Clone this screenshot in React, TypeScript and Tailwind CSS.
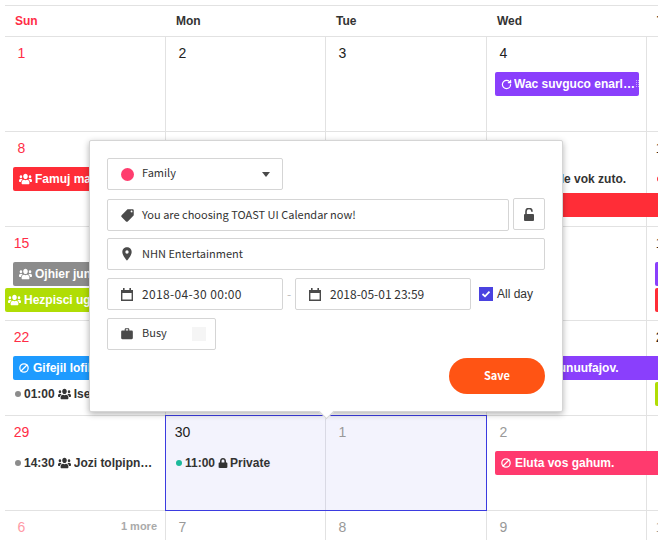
import type { ReactNode } from "react";
import { Ban, RotateCw } from "lucide-react";
import { FaLock, FaUsers } from "react-icons/fa";
import { MdLocalOffer, MdLocationOn, MdWork } from "react-icons/md";

const colStart = ["col-start-1", "col-start-2", "col-start-3", "col-start-4", "col-start-5"];
const weekGrid = "grid grid-cols-[161px_160px_161px_160px_160px]";

type DayTone = "sun" | "sunMuted" | "now" | "muted";

const toneClass: Record<DayTone, string> = {
  sun: "text-[#ff2d46]",
  sunMuted: "text-[#ff9aa6]",
  now: "text-[#222222]",
  muted: "text-[#999999]",
};

function Week({
  days,
  height,
  children,
}: {
  days: [string, DayTone][];
  height: string;
  children?: ReactNode;
}) {
  return (
    <div className={`${weekGrid} ${height} grid-rows-[35px_26px_26px_1fr] border-t border-[#e2e2e2]`}>
      {days.map(([label, tone], i) => (
        <div
          key={i}
          className={`${colStart[i]} row-span-full row-start-1 border-r border-[#e2e2e2] pl-[5px] pt-[6px] text-sm ${toneClass[tone]}`}
        >
          {label ? <div className="w-[23px] text-center leading-5">{label}</div> : null}
        </div>
      ))}
      {children}
    </div>
  );
}

function Bar({ className, children }: { className: string; children?: ReactNode }) {
  return (
    <div className={`flex h-6 items-center overflow-hidden rounded-[2px] text-xs font-bold whitespace-nowrap text-white ${className}`}>
      {children}
    </div>
  );
}

function Dot({ className, color, children }: { className: string; color: string; children: ReactNode }) {
  return (
    <div className={`flex h-6 items-center overflow-hidden pl-[10px] text-xs font-bold whitespace-nowrap text-[#333333] ${className}`}>
      <span className={`mr-[3px] h-[6px] w-[6px] shrink-0 rounded-full ${color}`} />
      {children}
    </div>
  );
}

function UsersIcon({ className }: { className: string }) {
  return <FaUsers className={`h-[12px] w-[13px] shrink-0 ${className}`} preserveAspectRatio="none" />;
}

function BanIcon() {
  return <Ban size={10} strokeWidth={3} className="mr-1 shrink-0 -scale-x-100" />;
}

function CalendarIcon() {
  return (
    <svg width="12" height="13" viewBox="0 0 12 13" fill="#4a4a4a">
      <path d="M2 0h1.6v2H8.4V0H10v2h2v11H0V2h2zM1.4 5v6.6h9.2V5z" fillRule="evenodd" />
    </svg>
  );
}

function Field({ className, icon, children }: { className: string; icon?: ReactNode; children: ReactNode }) {
  return (
    <div className={`flex h-8 items-center rounded-[2px] border border-[#d5d5d5] pl-[11px] text-[11px] text-[#333333] ${className}`}>
      <span className="mr-[7px] flex w-4 shrink-0 justify-center text-[#4a4a4a]">{icon}</span>
      {children}
    </div>
  );
}

function Popup() {
  return (
    <div className="absolute top-[140px] left-[89px] z-20 h-[272px] w-[474px] rounded-[2px] border border-[#d5d5d5] bg-white pt-[17px] pl-[17px] font-['Noto_Sans_CJK_KR',sans-serif] shadow-[0_2px_6px_0_rgba(0,0,0,0.3)]">
      <div className="flex flex-col gap-2">
        <Field
          className="w-[176px]"
          icon={<span className="h-[13px] w-[13px] rounded-full bg-[#ff3d6e]" />}
        >
          <span className="-mt-[3px]">Family</span>
          <svg className="ml-auto mr-[12px]" width="8" height="5" viewBox="0 0 8 5">
            <path d="M0 0h8L4 5z" fill="#4a4a4a" />
          </svg>
        </Field>
        <div className="flex h-8 w-[438px] items-start gap-1">
          <Field className="mt-px w-[402px]" icon={<MdLocalOffer size={15} className="-scale-x-100" />}>
            <span className="-mt-[2px]">You are choosing TOAST UI Calendar now!</span>
          </Field>
          <div className="flex h-8 w-8 items-center justify-center rounded-[2px] border border-[#d5d5d5]">
            <svg width="10" height="13" viewBox="0 0 10 13">
              <path d="M2 6.5V3.4a3 3 0 0 1 6 0v.4" fill="none" stroke="#4a4a4a" strokeWidth="1.6" />
              <rect y="6" width="10" height="7" rx="1" fill="#4a4a4a" />
            </svg>
          </div>
        </div>
        <Field className="w-[438px]" icon={<MdLocationOn size={16} />}>
          <span className="-mt-px">NHN Entertainment</span>
        </Field>
        <div className="flex h-8 items-center">
          <Field className="w-[176px]" icon={<CalendarIcon />}>
            <span className="-mt-px text-xs tracking-[0.35px]">2018-04-30 00:00</span>
          </Field>
          <span className="w-3 text-center text-xs text-[#bbbbbb]">-</span>
          <Field className="w-[176px]" icon={<CalendarIcon />}>
            <span className="-mt-px text-xs">2018-05-01 23:59</span>
          </Field>
          <span className="ml-2 flex h-[14px] w-[14px] items-center justify-center bg-[#4a42e0]">
            <svg width="10" height="8" viewBox="0 0 10 8">
              <path d="M1.5 4l2.5 2.3L8.5 1.6" fill="none" stroke="white" strokeWidth="1.8" />
            </svg>
          </span>
          <span className="ml-1 font-['Liberation_Sans',sans-serif] text-xs text-[#333333]">All day</span>
        </div>
        <Field className="w-[109px]" icon={<MdWork size={14} />}>
          <span className="-mt-[3px]">Busy</span>
          <span className="ml-auto mr-[9px] h-[14px] w-[14px] bg-[#f5f5f5]" />
        </Field>
        <div className="flex w-[438px] justify-end">
          <button className="h-9 w-24 rounded-full bg-[#ff5414] pb-[2px] text-[11px] font-bold text-white">Save</button>
        </div>
      </div>
      {/* arrow under the box */}
      <div className="absolute -bottom-[6px] left-[231px] h-[11px] w-[11px] rotate-45 border-r border-b border-[#d5d5d5] bg-white" />
    </div>
  );
}

export default function App() {
  return (
    <div className="relative h-[540px] w-[658px] overflow-hidden bg-white pt-[5px] pl-[5px] font-['Liberation_Sans',sans-serif]">
      <div className={`${weekGrid} h-[31px] items-center border-t border-[#e2e2e2] pb-[1px] text-xs font-bold text-[#333333]`}>
        <div className="pl-[10px] text-[#ff2d46]">Sun</div>
        <div className="pl-[10px]">Mon</div>
        <div className="pl-[10px]">Tue</div>
        <div className="pl-[10px]">Wed</div>
        <div className="pl-[10px]">Thu</div>
      </div>

      <Week
        height="h-[95px]"
        days={[["1", "sun"], ["2", "now"], ["3", "now"], ["4", "now"], ["5", "now"]]}
      >
        <Bar className="relative col-start-4 row-start-2 mr-2 ml-2 bg-[#8a3ffc] pr-[3px] pl-[6px]">
          <RotateCw size={11} strokeWidth={2.6} className="mr-[2px] shrink-0" />
          <span className="truncate">Wac suvguco enarlite lu.</span>
          <svg className="absolute top-2 right-0" width="3" height="8" viewBox="0 0 3 8">
            <path d="M0 0h1v1H0zM2 0h1v1H2zM0 2h1v1H0zM2 2h1v1H2zM0 4h1v1H0zM2 4h1v1H2zM0 6h1v1H0zM2 6h1v1H2z" fill="#ffffff" fillOpacity="0.55" />
          </svg>
        </Bar>
      </Week>

      <Week
        height="h-[95px]"
        days={[["8", "sun"], ["", "now"], ["", "now"], ["", "now"], ["12", "now"]]}
      >
        <Bar className="col-span-2 col-start-1 row-start-2 ml-2 bg-[#ff2d37] pl-[6px]">
          <UsersIcon className="mr-[3px]" />
          Famuj mazeli.
        </Bar>
        <Dot className="col-start-4 row-start-2 ml-0" color="bg-[#ff2d37]">
          <span className="ml-[23px]">Tumole vok zuto.</span>
        </Dot>
        <Dot className="col-start-5 row-start-2" color="bg-[#ff2d37]">
          <span />
        </Dot>
        <Bar className="col-span-2 col-start-4 row-start-3 ml-2 bg-[#ff2d37]" />
      </Week>

      <Week
        height="h-[94px]"
        days={[["15", "sun"], ["", "now"], ["", "now"], ["", "now"], ["19", "now"]]}
      >
        <Bar className="col-span-2 col-start-1 row-start-2 ml-2 bg-[#8c8c8c] pl-[6px]">
          <UsersIcon className="mr-[3px]" />
          Ojhier junad.
        </Bar>
        <Bar className="col-span-2 col-start-1 row-start-3 bg-[#b0dd05] pl-[3px]">
          <UsersIcon className="mr-[3px]" />
          Hezpisci ugnel.
        </Bar>
        <Bar className="col-start-5 row-start-2 ml-2 bg-[#8a3ffc]" />
        <Bar className="col-start-5 row-start-3 ml-2 bg-[#ff2d37]" />
      </Week>

      <Week
        height="h-[95px]"
        days={[["22", "sun"], ["", "now"], ["", "now"], ["", "now"], ["26", "now"]]}
      >
        <Bar className="col-span-2 col-start-1 row-start-2 ml-2 bg-[#1e9bff] pl-[6px]">
          <BanIcon />
          Gifejil lofilu.
        </Bar>
        <Dot className="col-start-1 row-start-3" color="bg-[#8c8c8c]">
          01:00
          <UsersIcon className="mx-[3px]" />
          Isejnal
        </Dot>
        <Bar className="col-span-2 col-start-4 row-start-2 ml-2 bg-[#8a3ffc] pl-[18px]">
          Wofzi munuufajov.
        </Bar>
        <Bar className="col-start-5 row-start-3 ml-2 bg-[#b0dd05]" />
      </Week>

      <Week
        height="h-[95px]"
        days={[["29", "sun"], ["", "now"], ["", "muted"], ["2", "muted"], ["3", "muted"]]}
      >
        {/* selected range */}
        <div className="relative z-10 col-span-2 col-start-2 row-span-full row-start-1 -mt-px -mb-px -ml-px border border-[#3b3be0] bg-[#f3f3fd]">
          <div className="grid h-full grid-cols-[160px_1fr] text-sm">
            <div className="border-r border-[#d9d9e4] pt-[6px] pl-[5px] text-[#222222]">
              <div className="w-[23px] text-center leading-5">30</div>
            </div>
            <div className="pt-[6px] pl-[5px] text-[#999999]">
              <div className="w-[23px] text-center leading-5">1</div>
            </div>
          </div>
        </div>
        <Dot className="relative z-10 col-start-2 row-start-2" color="bg-[#1cb99b]">
          11:00
          <FaLock size={10} className="mr-[2px] ml-[3px] shrink-0" />
          Private
        </Dot>
        <Dot className="col-start-1 row-start-2 mr-2" color="bg-[#8c8c8c]">
          14:30
          <UsersIcon className="mx-[3px]" />
          <span className="truncate">Jozi tolpipnawe duzi.</span>
        </Dot>
        <Bar className="col-span-2 col-start-4 row-start-2 ml-2 bg-[#ff3a6e] pl-[6px]">
          <BanIcon />
          Eluta vos gahum.
        </Bar>
      </Week>

      <Week
        height="h-[30px]"
        days={[["6", "sunMuted"], ["7", "muted"], ["8", "muted"], ["9", "muted"], ["10", "muted"]]}
      >
        <div className="col-start-1 row-start-1 mt-[9px] mr-[9px] text-right text-[11px] leading-3 font-bold text-[#aaaaaa]">1 more</div>
      </Week>

      <Popup />
    </div>
  );
}
